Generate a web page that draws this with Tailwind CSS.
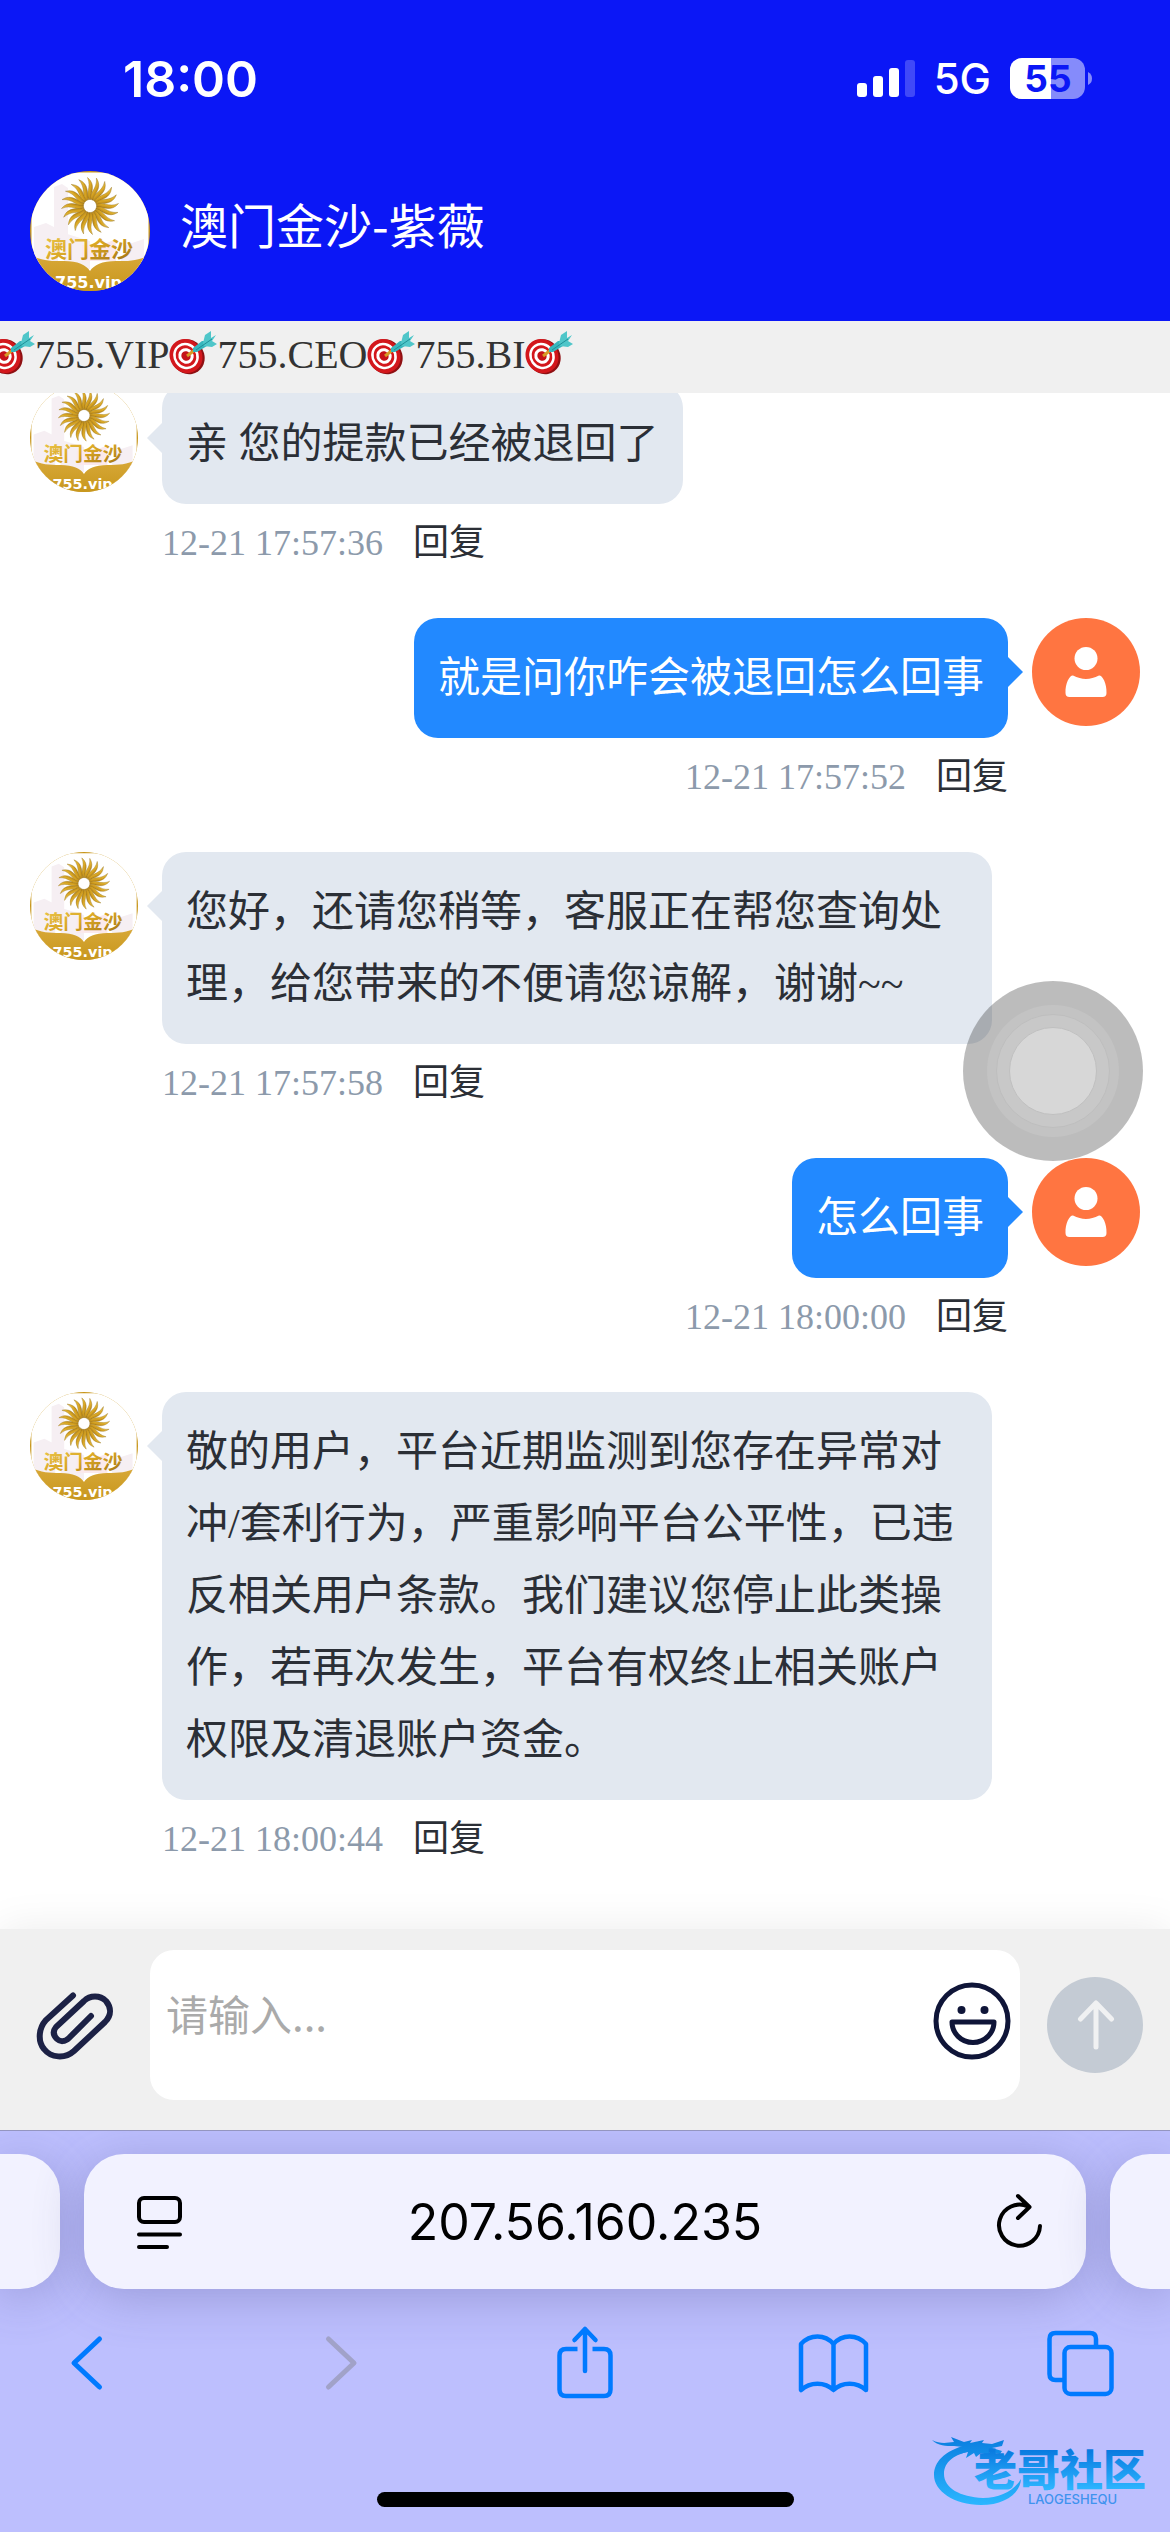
<!DOCTYPE html>
<html lang="zh-CN">
  <head>
    <meta charset="UTF-8" />
    <meta name="viewport" content="width=device-width, initial-scale=1.0" />
    <script src="https://cdn.jsdelivr.net/npm/@tailwindcss/browser@4"></script>
    <title>澳门金沙-紫薇</title>
  </head>
  <body
    class="min-h-screen flex flex-col bg-white text-[#2b2f36] font-['Liberation_Serif','Noto_Sans_CJK_SC',serif]"
  >
    <!-- Shared drawings -->
    <svg class="absolute w-0 h-0" aria-hidden="true">
      <defs>
        <linearGradient id="gold" x1="0" y1="0" x2="1" y2="1">
          <stop offset="0" stop-color="#ecc94f" />
          <stop offset="0.5" stop-color="#d9a624" />
          <stop offset="1" stop-color="#9a6c12" />
        </linearGradient>
        <linearGradient id="book" x1="0" y1="0" x2="0" y2="1">
          <stop offset="0" stop-color="#d8a838" />
          <stop offset="1" stop-color="#c8971d" />
        </linearGradient>
        <clipPath id="round"><circle cx="60" cy="60" r="60" /></clipPath>
        <path
          id="ray"
          d="M59.200 28.500C54.500 23 62 17 57.500 6.500C66.500 14 60.500 22 61 28.500Z"
          fill="url(#gold)"
          stroke="#94701c"
          stroke-width="0.400"
        />
      </defs>
      <symbol id="brand" viewBox="0 0 120 120">
        <g clip-path="url(#round)">
          <rect width="120" height="120" fill="#c8971d" />
          <rect x="1.500" y="1.500" width="117" height="117" rx="34" fill="#fff" />
          <path d="M24 16l8-3 6 4v60H24zM4 56l12-4 12 6v34H4zM34 62l26 8v28H34zM96 74l18-6v24H90z" fill="#f6eff3" />
          <path d="M52 74h20l14-6v22H52z" fill="#fbe9ec" />
          <g>
            <use href="#ray" />
            <use href="#ray" transform="rotate(18 60 35)" />
            <use href="#ray" transform="rotate(36 60 35)" />
            <use href="#ray" transform="rotate(54 60 35)" />
            <use href="#ray" transform="rotate(72 60 35)" />
            <use href="#ray" transform="rotate(90 60 35)" />
            <use href="#ray" transform="rotate(108 60 35)" />
            <use href="#ray" transform="rotate(126 60 35)" />
            <use href="#ray" transform="rotate(144 60 35)" />
            <use href="#ray" transform="rotate(162 60 35)" />
            <use href="#ray" transform="rotate(180 60 35)" />
            <use href="#ray" transform="rotate(198 60 35)" />
            <use href="#ray" transform="rotate(216 60 35)" />
            <use href="#ray" transform="rotate(234 60 35)" />
            <use href="#ray" transform="rotate(252 60 35)" />
            <use href="#ray" transform="rotate(270 60 35)" />
            <use href="#ray" transform="rotate(288 60 35)" />
            <use href="#ray" transform="rotate(306 60 35)" />
            <use href="#ray" transform="rotate(324 60 35)" />
            <use href="#ray" transform="rotate(342 60 35)" />
          </g>
          <path d="M0 84C14 90 20 90 34 90C48 90 56 94 60 100C64 94 72 90 86 90C100 90 106 90 120 84V120H0Z" fill="url(#book)" />
          <text x="15" y="86" font-family="Noto Sans CJK SC" font-weight="700" font-size="22" fill="url(#gold)">澳门金沙</text>
          <text x="25" y="117" font-family="DejaVu Sans" font-weight="700" font-size="16" fill="#fff">755.vip</text>
        </g>
      </symbol>
      <symbol id="user" viewBox="0 0 108 108">
        <circle cx="54" cy="54" r="54" fill="#ff7541" />
        <circle cx="54" cy="40.500" r="11.500" fill="#fff" />
        <path d="M41 57.500C50 62 58 62 67 57.500C70 57 75 65 74.500 75Q74.500 79 70.500 79H37.500Q33.500 79 33.500 75C33 65 38 57 41 57.500Z" fill="#fff" />
      </symbol>
      <symbol id="dart" viewBox="0 0 48 48">
        <g transform="rotate(-35 17 25)">
          <ellipse cx="18" cy="26.500" rx="16.500" ry="18" fill="#8f1013" />
          <ellipse cx="17" cy="25" rx="16" ry="17.500" fill="#d3171c" />
          <ellipse cx="17" cy="25" rx="12.500" ry="13.500" fill="#fff" />
          <ellipse cx="17" cy="25" rx="10" ry="11" fill="#d3171c" />
          <ellipse cx="17" cy="25" rx="7.500" ry="8" fill="#fff" />
          <ellipse cx="17" cy="25" rx="4.500" ry="5" fill="#c51318" />
        </g>
        <path d="M18 25L27 18" stroke="#d79a24" stroke-width="3" />
        <path d="M24 21L24 17L33 10L38 10L38 15L28 21Z" fill="#38b6bd" />
        <path d="M34 12L36 4L42 0L42 7L47 4L43 10L48 13L43 16L35 15Z" fill="#4fc6c9" />
        <path d="M27 19L43 8" stroke="#1f8f98" stroke-width="1" />
      </symbol>
    </svg>

    <!-- Header -->
    <header class="bg-[#0b17f6] text-white">
      <div class="h-[141px] pt-4 pl-[123px] pr-[78px] flex items-center justify-between font-['Inter',sans-serif]">
        <span class="text-[50px] leading-none font-semibold">18:00</span>
        <div class="flex items-center gap-[19px]">
          <svg class="w-[58px] h-[38px]" viewBox="0 0 58 38" fill="#fff">
            <rect y="23" width="10" height="14" rx="3" />
            <rect x="16" y="16" width="10" height="21" rx="3" />
            <rect x="32" y="8" width="10" height="29" rx="3" />
            <rect x="48" width="10" height="37" rx="3" fill-opacity="0.22" />
          </svg>
          <span class="text-[42px] leading-none font-medium">5G</span>
          <svg class="w-[82px] h-[42px]" viewBox="0 0 82 42">
            <clipPath id="charge"><rect width="41" height="42" /></clipPath>
            <rect width="75" height="41" rx="12" fill="#fff" fill-opacity="0.5" />
            <rect width="75" height="41" rx="12" fill="#fff" clip-path="url(#charge)" />
            <path d="M78 14Q82 16 82 20.500Q82 25 78 27Z" fill="#fff" fill-opacity="0.5" />
            <text x="38" y="34" text-anchor="middle" font-family="Inter" font-weight="700" font-size="37" fill="#0b17f6">55</text>
          </svg>
        </div>
      </div>
      <div class="h-[180px] px-[30px] flex items-center gap-[30px]">
        <svg class="size-[120px] shrink-0" role="img" aria-label="澳门金沙"><use href="#brand" /></svg>
        <h1 class="pb-4 text-5xl font-['Noto_Sans_CJK_SC',sans-serif]">澳门金沙-紫薇</h1>
      </div>
    </header>

    <!-- Scrolling notice -->
    <div class="h-[72px] bg-[#f0f0f0] overflow-hidden shrink-0">
      <p class="-ml-[13px] pb-1 h-full flex items-center whitespace-nowrap text-[40px] leading-none text-[#333]">
        <svg class="size-12 shrink-0"><use href="#dart" /></svg>755.VIP
        <svg class="size-12 shrink-0"><use href="#dart" /></svg>755.CEO
        <svg class="size-12 shrink-0"><use href="#dart" /></svg>755.BI
        <svg class="size-12 shrink-0"><use href="#dart" /></svg>
      </p>
    </div>

    <!-- Messages -->
    <main class="flex-1 overflow-hidden">
      <ul class="-mt-[9px] px-[30px] flex flex-col gap-12 text-[42px] leading-[72px]">
        <li class="flex items-start gap-6">
          <svg class="size-[108px] shrink-0"><use href="#brand" /></svg>
          <div class="max-w-[830px]">
            <div class="relative w-fit p-6 rounded-3xl bg-[#e2e8f0]">
              <svg class="absolute right-full top-[39px] w-[15px] h-[30px]" viewBox="0 0 15 30"><path d="M15 0L0 15L15 30Z" fill="#e2e8f0" /></svg>
              <p>亲 您的提款已经被退回了</p>
            </div>
            <div class="mt-3 flex items-center gap-[30px] text-4xl leading-[54px]">
              <time class="text-[#8c9aab]">12-21 17:57:36</time>
              <button>回复</button>
            </div>
          </div>
        </li>

        <li class="flex flex-row-reverse items-start gap-6">
          <svg class="size-[108px] shrink-0"><use href="#user" /></svg>
          <div class="max-w-[830px] flex flex-col items-end">
            <div class="relative w-fit p-6 rounded-3xl bg-[#2289ff] text-white">
              <svg class="absolute left-full top-[39px] w-[15px] h-[30px]" viewBox="0 0 15 30"><path d="M0 0L15 15L0 30Z" fill="#2289ff" /></svg>
              <p>就是问你咋会被退回怎么回事</p>
            </div>
            <div class="mt-3 flex items-center gap-[30px] text-4xl leading-[54px]">
              <time class="text-[#8c9aab]">12-21 17:57:52</time>
              <button>回复</button>
            </div>
          </div>
        </li>

        <li class="flex items-start gap-6">
          <svg class="size-[108px] shrink-0"><use href="#brand" /></svg>
          <div class="max-w-[830px]">
            <div class="relative w-fit p-6 rounded-3xl bg-[#e2e8f0]">
              <svg class="absolute right-full top-[39px] w-[15px] h-[30px]" viewBox="0 0 15 30"><path d="M15 0L0 15L15 30Z" fill="#e2e8f0" /></svg>
              <p>您好，还请您稍等，客服正在帮您查询处理，给您带来的不便请您谅解，谢谢~~</p>
            </div>
            <div class="mt-3 flex items-center gap-[30px] text-4xl leading-[54px]">
              <time class="text-[#8c9aab]">12-21 17:57:58</time>
              <button>回复</button>
            </div>
          </div>
        </li>

        <li class="flex flex-row-reverse items-start gap-6">
          <svg class="size-[108px] shrink-0"><use href="#user" /></svg>
          <div class="max-w-[830px] flex flex-col items-end">
            <div class="relative w-fit p-6 rounded-3xl bg-[#2289ff] text-white">
              <svg class="absolute left-full top-[39px] w-[15px] h-[30px]" viewBox="0 0 15 30"><path d="M0 0L15 15L0 30Z" fill="#2289ff" /></svg>
              <p>怎么回事</p>
            </div>
            <div class="mt-3 flex items-center gap-[30px] text-4xl leading-[54px]">
              <time class="text-[#8c9aab]">12-21 18:00:00</time>
              <button>回复</button>
            </div>
          </div>
        </li>

        <li class="flex items-start gap-6">
          <svg class="size-[108px] shrink-0"><use href="#brand" /></svg>
          <div class="max-w-[830px]">
            <div class="relative w-fit p-6 rounded-3xl bg-[#e2e8f0]">
              <svg class="absolute right-full top-[39px] w-[15px] h-[30px]" viewBox="0 0 15 30"><path d="M15 0L0 15L15 30Z" fill="#e2e8f0" /></svg>
              <p>敬的用户，平台近期监测到您存在异常对冲/套利行为，严重影响平台公平性，已违反相关用户条款。我们建议您停止此类操作，若再次发生，平台有权终止相关账户权限及清退账户资金。</p>
            </div>
            <div class="mt-3 flex items-center gap-[30px] text-4xl leading-[54px]">
              <time class="text-[#8c9aab]">12-21 18:00:44</time>
              <button>回复</button>
            </div>
          </div>
        </li>
      </ul>
    </main>

    <!-- Floating assistive button -->
    <button
      aria-label="辅助触控"
      class="absolute right-[27px] top-[981px] size-[180px] rounded-full bg-[#272727]/31 flex items-center justify-center"
    >
      <span class="size-[132px] rounded-full bg-[#c3c3c3] flex items-center justify-center">
        <span class="size-[114px] rounded-full bg-[#c8c8c8] border border-[#bebebe] flex items-center justify-center">
          <span class="size-[88px] rounded-full bg-[#d7d7d7] border border-[#c0c0c0]"></span>
        </span>
      </span>
    </button>

    <!-- Message box -->
    <form class="pt-[21px] pb-[30px] flex items-center bg-[#f0f0f0] shadow-[0_0_40px_rgba(0,0,0,0.08)]">
      <button type="button" aria-label="附件" class="w-[150px] flex justify-center">
        <svg class="w-20 h-[72px]" viewBox="0 0 80 72" fill="none" stroke="#1c2145" stroke-width="6" stroke-linecap="round">
          <path d="M38 6.500L11 31C3 40 3 53 9 60C16 69 30 70 39 62L70 33C77 26 76 18 71 12C65 6 55 6 49 12L21 38C17 43 19 47 22 50C25 53 30 53 34 49L56 27" />
        </svg>
      </button>
      <div class="flex-1 h-[150px] pr-2 flex items-center bg-white rounded-3xl">
        <textarea
          aria-label="消息"
          placeholder="请输入..."
          class="flex-1 h-full px-4 py-[30px] resize-none outline-none text-[42px] leading-[66px] placeholder:text-[#aaa] font-['Noto_Sans_CJK_SC',sans-serif]"
        ></textarea>
        <button type="button" aria-label="表情" class="pb-2">
          <svg class="size-20" viewBox="0 0 80 80" fill="none" stroke="#0f1538" stroke-width="5" stroke-linejoin="round">
            <circle cx="40" cy="40" r="36" />
            <path d="M20 41H62C62 52 53 61.500 41 61.500C29 61.500 20 52 20 41Z" />
            <circle cx="29.500" cy="29" r="4" fill="#0f1538" stroke="none" />
            <circle cx="52.500" cy="29" r="4" fill="#0f1538" stroke="none" />
          </svg>
        </button>
      </div>
      <button aria-label="发送" class="w-[150px] flex justify-center">
        <svg class="size-24" viewBox="0 0 96 96" fill="none" stroke="#f0f1f2" stroke-width="5" stroke-linecap="round" stroke-linejoin="round">
          <circle cx="48" cy="48" r="48" fill="#c4cbd4" stroke="none" />
          <path d="M49 70V27M33.500 42L49 26L64.500 42" />
        </svg>
      </button>
    </form>

    <!-- Browser bars -->
    <footer class="relative overflow-hidden border-t border-[#9495c0] bg-[#bdbffe] pt-[23px] pb-[25px]">
      <div class="flex gap-6">
        <div class="w-[60px] h-[135px] rounded-r-[40px] bg-[#f2f2ff] shadow-[0_8px_50px_rgba(70,70,130,0.3)]"></div>
        <div class="flex-1 h-[135px] pl-11 pr-8 flex items-center justify-between rounded-[40px] bg-[#f2f2ff] shadow-[0_8px_50px_rgba(70,70,130,0.3)] text-black font-['Inter',sans-serif]">
          <button aria-label="页面设置">
            <svg class="w-[62px] h-[60px]" viewBox="0 0 62 60" fill="none" stroke="#000" stroke-width="4" stroke-linecap="round">
              <rect x="11" y="6" width="41" height="24" rx="5" />
              <path d="M11 42.500H52M11 55H39" />
            </svg>
          </button>
          <span class="text-[50px] leading-none">207.56.160.235</span>
          <button aria-label="重新载入">
            <svg class="w-[74px] h-[60px]" viewBox="0 0 74 60" fill="none" stroke="#000" stroke-width="4" stroke-linecap="round" stroke-linejoin="round">
              <path d="M60 34A20.500 20.500 0 1 1 48 14.500M38 4L49.500 15L38 26" />
            </svg>
          </button>
        </div>
        <div class="w-[60px] h-[135px] rounded-l-[40px] bg-[#f2f2ff] shadow-[0_8px_50px_rgba(70,70,130,0.3)]"></div>
      </div>

      <nav class="pt-9 px-[51px] flex justify-between">
        <button aria-label="后退">
          <svg class="w-[72px] h-[76px]" viewBox="0 0 72 76" fill="none" stroke="#007aff" stroke-width="5" stroke-linecap="round" stroke-linejoin="round">
            <path d="M48.500 14L23 38L48.500 62" />
          </svg>
        </button>
        <button aria-label="前进">
          <svg class="w-[72px] h-[76px]" viewBox="0 0 72 76" fill="none" stroke="#a1a2c8" stroke-width="5" stroke-linecap="round" stroke-linejoin="round">
            <path d="M28.500 14L54 38L28.500 62" />
          </svg>
        </button>
        <button aria-label="分享">
          <svg class="w-[72px] h-[76px]" viewBox="0 0 72 76" fill="none" stroke="#007aff" stroke-width="4.500" stroke-linecap="round" stroke-linejoin="round">
            <path d="M36 46V4M25.500 15L36 4L46.500 15" />
            <path d="M28.500 24H17Q10.500 24 10.500 30.500V64.500Q10.500 71 17 71H55Q61.500 71 61.500 64.500V30.500Q61.500 24 55 24H43.500" stroke-linecap="butt" />
          </svg>
        </button>
        <button aria-label="书签">
          <svg class="w-[72px] h-[76px]" viewBox="0 0 72 76" fill="none" stroke="#007aff" stroke-width="4.500" stroke-linejoin="round">
            <path d="M3 65V19C12 9 27 9 35.500 19C44 9 59 9 68 19V65C59 56.500 44 56.500 35.500 65C27 56.500 12 56.500 3 65ZM35.500 18V66" />
          </svg>
        </button>
        <button aria-label="标签页">
          <svg class="w-[72px] h-[76px]" viewBox="0 0 72 76" fill="none" stroke="#007aff" stroke-width="4.500">
            <rect x="17.500" y="22" width="47" height="47" rx="6" />
            <path d="M17 55H8.500Q2.500 55 2.500 49V14Q2.500 8 8.500 8H43Q49 8 49 14V22" />
          </svg>
        </button>
      </nav>

      <div class="mt-[91px] mx-auto w-[417px] h-[15px] rounded-full bg-black"></div>

      <!-- Community mark -->
      <svg class="absolute right-[18px] bottom-[25px] w-[220px] h-[74px]" viewBox="0 0 220 74" role="img" aria-label="老哥社区">
        <linearGradient id="wave" gradientUnits="userSpaceOnUse" x1="0" y1="5" x2="0" y2="72">
          <stop offset="0" stop-color="#0a7fe0" />
          <stop offset="1" stop-color="#2bb6ff" />
        </linearGradient>
        <linearGradient id="ink" gradientUnits="userSpaceOnUse" x1="0" y1="18" x2="0" y2="56">
          <stop offset="0" stop-color="#0a7be0" />
          <stop offset="1" stop-color="#2cb4ff" />
        </linearGradient>
        <g fill="url(#wave)">
          <path d="M34 12C12 18 2 29 2 42C2 58 22 72 49 72C72 72 88 61 89 46C82 58 68 65 51 65C28 64 12 55 12 41C12 29 22 21 40 18Z" />
          <path d="M0 7C8 11 14 10 22 9L19 4L32 9L40 7L38 10L52 7L50 10L60 11L72 7L70 13L60 15L70 18L68 21L57 19L60 23L49 20L44 24L42 20L34 25L36 19L27 21L31 14L22 13C14 13 6 13 0 7Z" />
        </g>
        <text x="42" y="53" font-family="Noto Sans CJK SC" font-weight="900" font-size="43" fill="url(#ink)">老哥社区</text>
        <text x="96" y="71" font-family="Inter" font-weight="500" font-size="13" fill="#3f93ee">LAOGESHEQU</text>
      </svg>
    </footer>
  </body>
</html>
